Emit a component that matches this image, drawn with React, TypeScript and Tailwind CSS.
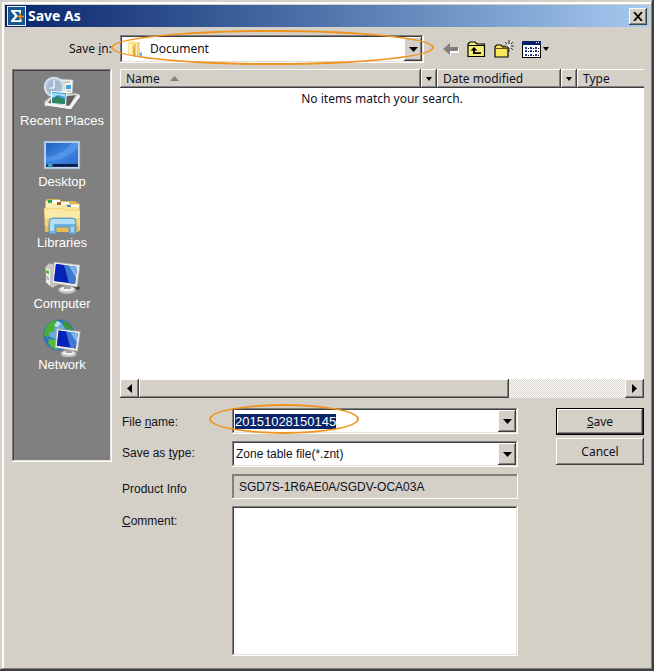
import { useEffect, useRef, useState } from "react";

const raised =
  "bg-[#d4d0c8] shadow-[inset_-1px_-1px_#404040,inset_1px_1px_#ffffff,inset_-2px_-2px_#808080]";
const sunken =
  "shadow-[inset_-1px_-1px_#ffffff,inset_1px_1px_#808080,inset_-2px_-2px_#e4e0d8,inset_2px_2px_#404040]";
const tahoma = "font-['Noto_Sans',sans-serif]";

const DownArrow = ({ small = false }: { small?: boolean }) => (
  <svg
    className={small ? "w-[6px] h-[4px]" : "w-[9px] h-[5px]"}
    viewBox="0 0 8 4"
    preserveAspectRatio="none"
  >
    <path d="M0 0h8L4 4z" fill="#000" />
  </svg>
);

const LogoIcon = () => (
  <svg width="19" height="20" viewBox="0 0 19 20">
    <rect width="19" height="20" fill="#e8eef4" />
    <rect x="1" y="1" width="17" height="18" fill="#14588f" />
    <path d="M4 4h10v3h-1.500l-.5-1.200H7.500L11 10l-3.800 4.300H12.500l.5-1.500h1.500V16H4v-1.600L8 10 4 5.600z" fill="#fff" />
    <path d="M13 7v7M10 10.500h7" stroke="#f08a1c" strokeWidth="1.600" />
  </svg>
);

const FolderIcon = () => (
  <svg width="18" height="18" viewBox="0 0 18 18">
    <path d="M2 2l7-1v14l-2 1-5-2z" fill="#f7e296" />
    <path d="M3 3l3 1v11l-3-1z" fill="#fcf1bd" />
    <path d="M9 3l5-1v13l-4 2-3-1V6z" fill="#f0cd68" />
    <path d="M7 7l2-1v11l-2-1z" fill="#e0a848" />
    <path d="M10 4l1 0v12l-1 1z" fill="#fff2b8" />
    <path d="M12 5l2-2v12l-2 1z" fill="#f6dc88" />
    <path d="M13 13l3-1v4l-2 1z" fill="#6cb4e4" />
  </svg>
);

const RecentIcon = () => (
  <svg width="38" height="36" viewBox="0 0 38 36">
    <path d="M15 3l15 1-1 20-14-2z" fill="#f3f3f1" stroke="#b9b9b9" strokeWidth=".6" />
    <path d="M18 6h9M18 8h4M18 11h4M18 13h4M24 15h4" stroke="#a5a5a5" />
    <path d="M23 9h5v4h-5z" fill="#4c9fd0" />
    <circle cx="11" cy="11" r="9.500" fill="#b7c8dc" stroke="#dde6ee" strokeWidth="1.600" />
    <circle cx="11" cy="11" r="7" fill="#a3b9d2" />
    <path d="M11 4v8M11 12H6" stroke="#fff" fill="none" strokeWidth="1.200" />
    <path d="M1 26l7-6 25-3 4 2-9 15-26-4z" fill="#dededb" stroke="#8e8e8c" strokeWidth=".7" />
    <path d="M5 27l4-5 24-3-7 11z" fill="#5e5e5c" />
    <path d="M8 15l16 1-1 13-15-1z" fill="#fff" />
    <path d="M9 16l14 1-1 11-13-1z" fill="#3499dc" />
    <path d="M9 23l5-3 8 4v4l-13-1z" fill="#2d8461" />
    <path d="M9 17l13 1v3l-7-2-6 3z" fill="#a9dcf5" />
    <path d="M2 27l25 3 9-12 1 3-9 12-26-3z" fill="#f4f4f1" />
    <path d="M3 30l25 4 9-12" fill="none" stroke="#797977" />
  </svg>
);

const DesktopIcon = () => (
  <svg width="38" height="36" viewBox="0 0 38 36">
    <defs>
      <linearGradient id="desk" x1="0" y1="0" x2="1" y2="1">
        <stop offset="0" stopColor="#2160c0" />
        <stop offset=".5" stopColor="#3f86e2" />
        <stop offset="1" stopColor="#2a6acb" />
      </linearGradient>
    </defs>
    <path d="M1 4h36v28H1z" fill="#c4d5e8" stroke="#809bb8" strokeWidth=".6" />
    <path d="M3 6h32v24H3z" fill="url(#desk)" />
    <path d="M3 20C14 19 24 13 29 6h6v4C28 19 15 24 3 24z" fill="#6aa8ee" opacity=".45" />
    <path d="M3 27h32v3H3z" fill="#12306a" />
    <path d="M11 27h22v2H11z" fill="#0b1e4a" />
    <circle cx="7" cy="28" r="2.500" fill="#3787ca" />
    <path d="M6 27h1v1H6z" fill="#f7c53e" />
    <path d="M7 28h1v1H7z" fill="#82c850" />
  </svg>
);

const LibrariesIcon = () => (
  <svg width="38" height="36" viewBox="0 0 38 36">
    <path d="M2 3l2-2h12l2 2h14l5 3v26H2z" fill="#dcb354" />
    <path d="M3 3h12v8H3z" fill="#faedb4" />
    <path d="M9 2h8v3H9z" fill="#fff" />
    <path d="M5 2h4v3H5z" fill="#2aa83a" />
    <path d="M14 4h11v8H14z" fill="#f9e8a5" />
    <path d="M18 4h8v3h-8z" fill="#fff" />
    <path d="M14 4h4v3h-4z" fill="#a9602b" />
    <path d="M22 6h14v9H22z" fill="#f7e298" />
    <path d="M28 7h8v2h-8z" fill="#fff" />
    <path d="M24 7h4v2h-4z" fill="#3a8be0" />
    <path d="M1 10h19l3 2h14v20l-2 2H2z" fill="#f4d67c" />
    <path d="M2 11h17l3 2h14v7H2z" fill="#fbe9a8" />
    <path d="M2 28h34v4l-2 2H2z" fill="#e7bd5b" />
    <path d="M6 36V24q0-4 4-4h19q4 0 4 4v12h-7v-7H13v7z" fill="#6fb4e0" stroke="#468eb9" strokeWidth=".7" />
    <path d="M7 29V24q0-3 3-3h19q3 0 3 3v2H11v7H7z" fill="#b4def5" />
    <path d="M28 29h3v5h-3z" fill="#a6d6f2" />
  </svg>
);

const Monitor = () => (
  <>
    <ellipse cx="24" cy="31" rx="9" ry="4" fill="#c2c2be" stroke="#888" strokeWidth=".5" />
    <ellipse cx="24" cy="30" rx="7" ry="2.500" fill="#efefec" />
    <path d="M21 24h7v6h-7z" fill="#a1a19e" />
    <path d="M11 3l26 3-3 22-25-4z" fill="#efeee8" stroke="#a4a49e" strokeWidth=".7" />
    <path d="M13 5l21 3-2 17-21-3z" fill="#0c2f9e" />
    <path d="M13 5l8 1 4 17-14-1z" fill="#0522b8" />
    <path d="M21 6l13 2-2 17-6-1z" fill="#3f78d0" />
    <path d="M26 7l8 1-1 11z" fill="#7fb4ec" />
  </>
);

const ComputerIcon = () => (
  <svg width="38" height="36" viewBox="0 0 38 36">
    <path d="M2 8l4-4 9 2v20l-6 3-6-6z" fill="#c7c7c3" stroke="#84847f" strokeWidth=".6" />
    <path d="M3 9l4 2v16l-4-4z" fill="#eeeeea" />
    <path d="M3 11l3 1v3l-3-1z" fill="#54b839" />
    <path d="M3 17l3 2M3 19l3 2" stroke="#777" strokeWidth=".7" />
    <ellipse cx="33" cy="29" rx="4" ry="2" fill="#484846" />
    <Monitor />
  </svg>
);

const NetworkIcon = () => (
  <svg width="38" height="38" viewBox="0 0 38 38">
    <circle cx="16" cy="16" r="15.500" fill="#2a75bd" />
    <circle cx="13" cy="11" r="9" fill="#85c0e8" opacity=".7" />
    <path d="M2 11q3-8 11-10l3 3-4 3-1 5-5 2-1 5-4-3z" fill="#4caf35" />
    <path d="M20 2q7 2 10 9l-6-1-3-3z" fill="#3b9b2d" />
    <path d="M6 20l7 1 3 6-2 4q-6-2-9-7z" fill="#58b83d" />
    <path d="M14 2l4 2-3 4-4-1z" fill="#d3efff" opacity=".8" />
    <g transform="translate(4 7) scale(.9)">
      <Monitor />
    </g>
  </svg>
);

const BackIcon = () => (
  <svg width="16" height="14" viewBox="0 0 16 14">
    <path d="M2 8l6 6v-3h8V6" fill="#fff" />
    <path d="M0 7l7-6v4h8v4H7v4z" fill="#808080" />
  </svg>
);

const UpIcon = () => (
  <svg width="19" height="17" viewBox="0 0 19 17">
    <path d="M1 15.500V3l2-2h5l2 2h7.500v12.500z" fill="#f8ec72" stroke="#000" strokeWidth="1.200" />
    <path d="M1 4.500h16" stroke="#000" />
    <path d="M7 6L3.500 9.500H6V13h8v-1.700H8V9.500h2.500z" fill="#000" />
  </svg>
);

const NewFolderIcon = () => (
  <svg width="20" height="19" viewBox="0 0 20 19">
    <path d="M1 17V7l1.500-2H7l1.500 2H14v10z" fill="#f8e85c" stroke="#000" strokeWidth="1.200" />
    <path d="M1 8.500h13" stroke="#5c5216" />
    <path d="M15 0v4M15 8v4M9 6h3M17 6h3M11 2l2 2M17 8l2 2M19 2l-2 2" stroke="#333" />
    <path d="M14 5h2v2h-2z" fill="#fff" />
  </svg>
);

const ViewsIcon = () => (
  <svg width="19" height="17" viewBox="0 0 19 17">
    <rect x=".5" y=".5" width="18" height="16" fill="#fff" stroke="#000" />
    <path d="M0 0h19v4H0z" fill="#0a1f6a" />
    <path d="M14 1h1v1h-1zM16 1h1v1h-1z" fill="#fff" />
    <path d="M3 6h2v2H3zM8 6h2v2H8zM13 6h2v2h-2zM3 9h2v2H3zM8 9h2v2H8zM13 9h2v2h-2zM3 13h2v2H3zM8 13h2v2H8zM13 13h2v2h-2z" fill="#28348c" />
    <path d="M6 7.500h1M11 7.500h1M16 7.500h1M6 10.500h1M11 10.500h1M16 10.500h1M6 14.500h1M11 14.500h1M16 14.500h1" stroke="#000" />
  </svg>
);

const places = [
  { name: "Recent Places", Icon: RecentIcon },
  { name: "Desktop", Icon: DesktopIcon },
  { name: "Libraries", Icon: LibrariesIcon },
  { name: "Computer", Icon: ComputerIcon },
  { name: "Network", Icon: NetworkIcon },
];

const DropButton = () => (
  <span
    className={`pointer-events-none absolute right-[2px] top-[2px] bottom-[2px] w-[18px] flex items-center justify-center ${raised}`}
  >
    <DownArrow />
  </span>
);

const Highlight = ({ className }: { className: string }) => (
  <div
    className={`pointer-events-none absolute z-10 rounded-[50%] border-2 border-[#f0941f] ${className}`}
  />
);

const App = () => {
  const [fileName, setFileName] = useState("20151028150145");
  const [comment, setComment] = useState("");
  const fileRef = useRef<HTMLInputElement>(null);

  useEffect(() => {
    fileRef.current?.focus();
    fileRef.current?.select();
  }, []);

  return (
    <main className="min-h-screen bg-[#d4d0c8] p-[5px] pb-[15px] font-['Liberation_Sans',sans-serif] text-[12px] leading-4 text-[#10101c] shadow-[inset_-2px_-2px_#404040,inset_2px_2px_#d4d0c8,inset_-3px_-3px_#808080,inset_4px_4px_#ffffff]">
      <header className="flex h-[22px] items-center gap-[2px] bg-linear-to-r from-[#0a246a] to-[#a6caf0] px-[2px]">
        <LogoIcon />
        <h1 className={`flex-1 text-[14px] font-bold text-white ${tahoma}`}>Save As</h1>
        <button aria-label="Close" className={`flex h-[17px] w-[18px] items-center justify-center ${raised}`}>
          <svg width="10" height="9" viewBox="0 0 10 9">
            <path d="M1 0l8 9M9 0L1 9" stroke="#000" strokeWidth="1.800" />
          </svg>
        </button>
      </header>

      <div className={`mt-2 flex h-[28px] items-center pl-[7px] ${tahoma}`}>
        <label htmlFor="folder" className="w-[100px] text-right">
          Save <u>i</u>n:
        </label>
        <div className="relative ml-2 h-full w-[304px]">
          <select id="folder" className={`h-full w-full appearance-none bg-white pl-[30px] ${sunken}`}>
            <option>Document</option>
          </select>
          <span className="pointer-events-none absolute left-[6px] top-[5px]">
            <FolderIcon />
          </span>
          <DropButton />
          <Highlight className="-left-[9px] -right-[10px] -top-[5px] -bottom-[2px]" />
        </div>
        <div className="ml-[19px] flex items-center gap-2">
          <button aria-label="Back"><BackIcon /></button>
          <button aria-label="Up one level"><UpIcon /></button>
          <button aria-label="New folder"><NewFolderIcon /></button>
          <button aria-label="Views" className="flex items-center gap-[2px]">
            <ViewsIcon />
            <DownArrow small />
          </button>
        </div>
      </div>

      <div className="mt-[6px] flex items-start gap-2 pl-[7px] pr-[5px]">
        <nav className={`flex h-[393px] w-[100px] shrink-0 flex-col gap-2 bg-[#808080] pt-[7px] ${sunken}`}>
          {places.map(({ name, Icon }) => (
            <button key={name} className="flex h-[53px] flex-col items-center justify-between text-white">
              <span className="flex h-[36px] items-center"><Icon /></span>
              <span className="whitespace-nowrap text-[13px]">{name}</span>
            </button>
          ))}
        </nav>

        <div className="min-w-0 flex-1">
          <div className={`h-[310px] bg-white ${tahoma}`}>
            <table className="w-full table-fixed border-collapse">
              <thead>
                <tr className="h-[19px] text-left">
                  <th className="p-0 font-normal">
                    <div className="flex h-[19px]">
                      <span className={`flex flex-1 items-center gap-[10px] pl-[6px] ${raised}`}>
                        Name
                        <svg width="9" height="5" viewBox="0 0 9 5">
                          <path d="M0 5h9L4.500 0z" fill="#808080" />
                        </svg>
                      </span>
                      <button aria-label="Filter name" className={`flex w-[16px] items-center justify-center ${raised}`}>
                        <DownArrow small />
                      </button>
                    </div>
                  </th>
                  <th className="w-[140px] p-0 font-normal">
                    <div className="flex h-[19px]">
                      <span className={`flex flex-1 items-center pl-[6px] ${raised}`}>Date modified</span>
                      <button aria-label="Filter date" className={`flex w-[16px] items-center justify-center ${raised}`}>
                        <DownArrow small />
                      </button>
                    </div>
                  </th>
                  <th className="w-[67px] p-0 font-normal">
                    <div className="flex h-[19px] items-center bg-[#d4d0c8] pl-[6px] shadow-[inset_0_-1px_#404040,inset_1px_1px_#ffffff,inset_0_-2px_#808080]">
                      Type
                    </div>
                  </th>
                </tr>
              </thead>
              <tbody>
                <tr>
                  <td colSpan={3} className="pt-[3px] text-center">
                    No items match your search.
                  </td>
                </tr>
              </tbody>
            </table>
          </div>
          <div className="flex h-[19px] bg-[repeating-conic-gradient(#dedbd5_0_25%,#f6f5f3_0_50%)] bg-[length:2px_2px]">
            <button aria-label="Scroll left" className={`flex w-[19px] items-center justify-center ${raised}`}>
              <svg width="5" height="9" viewBox="0 0 5 9"><path d="M5 0v9L0 4.500z" /></svg>
            </button>
            <div className={`w-[370px] ${raised}`} />
            <div className="flex-1" />
            <button aria-label="Scroll right" className={`flex w-[19px] items-center justify-center ${raised}`}>
              <svg width="5" height="9" viewBox="0 0 5 9"><path d="M0 0v9l5-4.500z" /></svg>
            </button>
          </div>

          <form className="mt-[10px] flex items-start" onSubmit={(e) => e.preventDefault()}>
            <div className="grid flex-1 grid-cols-[110px_1fr] gap-y-[7px] pl-[2px]">
              <label htmlFor="file" className="pt-[6px]">
                File <u>n</u>ame:
              </label>
              <div className="relative h-[26px]">
                <input
                  id="file"
                  ref={fileRef}
                  value={fileName}
                  onChange={(e) => setFileName(e.target.value)}
                  className={`h-full w-full bg-white pl-[3px] text-[13px] outline-none selection:bg-[#0a246a] selection:text-white ${sunken}`}
                />
                <DropButton />
                <Highlight className="-left-[23px] w-[150px] -top-[4px] h-[30px]" />
              </div>
              <label htmlFor="type" className="pt-[4px]">
                Save as <u>t</u>ype:
              </label>
              <div className="relative h-[26px]">
                <select id="type" className={`h-full w-full appearance-none bg-white pl-[4px] ${sunken}`}>
                  <option>Zone table file(*.znt)</option>
                </select>
                <DropButton />
              </div>
              <label htmlFor="product" className="pt-[7px]">
                Product Info
              </label>
              <input
                id="product"
                readOnly
                value="SGD7S-1R6AE0A/SGDV-OCA03A"
                className="h-[25px] w-full pl-[7px] shadow-[inset_-1px_-1px_#ffffff,inset_1px_1px_#808080,inset_2px_2px_#808080]"
              />
              <label htmlFor="comment" className="pt-[7px]">
                <u>C</u>omment:
              </label>
              <textarea
                id="comment"
                value={comment}
                onChange={(e) => setComment(e.target.value)}
                className={`block h-[150px] w-full resize-none bg-white p-1 ${sunken}`}
              />
            </div>
            <div className={`ml-[38px] flex w-[88px] flex-col gap-[3px] ${tahoma}`}>
              <button type="submit" className="h-[27px] bg-[#d4d0c8] shadow-[inset_0_0_0_1px_#000000,inset_-2px_-2px_#404040,inset_2px_2px_#ffffff,inset_-3px_-3px_#808080]">
                <u>S</u>ave
              </button>
              <button type="button" className={`h-[27px] ${raised}`}>
                Cancel
              </button>
            </div>
          </form>
        </div>
      </div>
    </main>
  );
};
export default App;
